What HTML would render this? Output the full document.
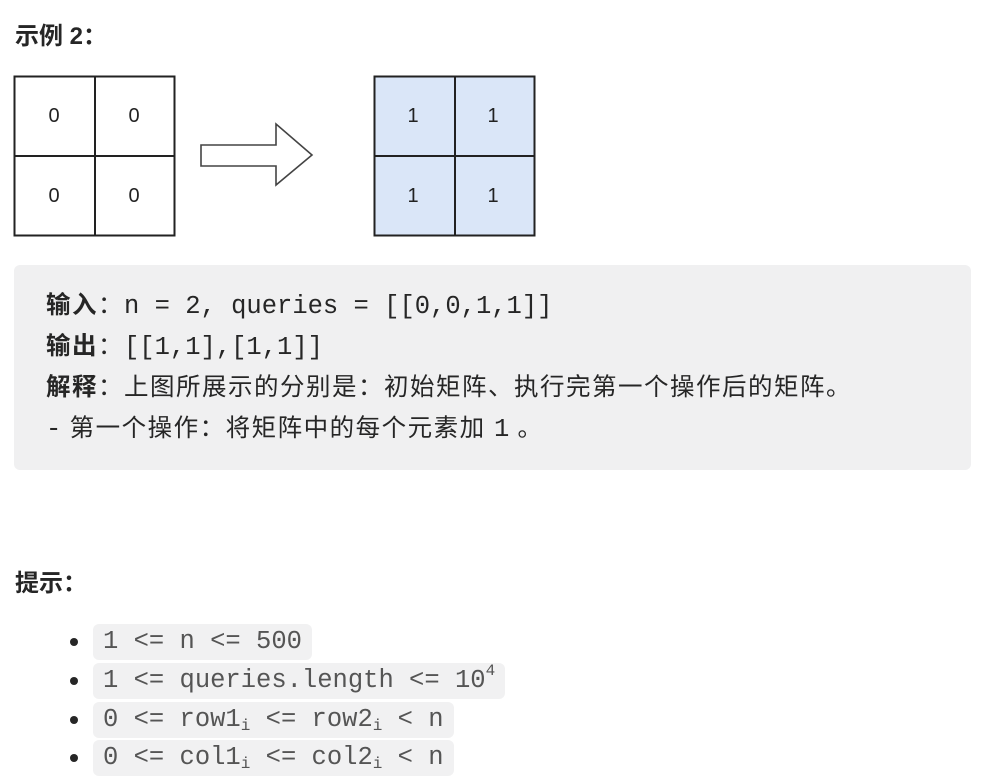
<!DOCTYPE html>
<html><head><meta charset="utf-8"><style>
body{margin:0;background:#fff;width:986px;height:782px;position:relative;font-family:"Liberation Sans","Noto Sans CJK SC",sans-serif;color:#262626;overflow:hidden}
.abs{position:absolute}
h{position:absolute;font-weight:bold;font-size:24px}
.pre{position:absolute;left:14px;top:265px;width:957px;height:205px;background:#f0f0f1;border-radius:6px}
.ln{position:absolute;left:32px;font-size:24.5px;letter-spacing:1.5px;white-space:pre;height:41px;line-height:41px}
.m{font-family:"Liberation Mono",monospace;font-size:25.5px;letter-spacing:0}
.li{position:absolute;left:93px;height:36px;line-height:36px;background:#f1f1f2;border-radius:6px;padding:0 10px;font-family:"Liberation Mono",monospace;font-size:25.5px;color:#555;white-space:pre}
.dot{position:absolute;left:70px;width:8px;height:8px;border-radius:50%;background:#262626}
sub{font-size:16px;vertical-align:-4px;line-height:0}
sup{font-size:16px;vertical-align:12px;line-height:0}
</style></head><body>
<h style="left:15px;top:16px">示例 2：</h>
<svg class="abs" style="left:0;top:0" width="560" height="250">
<g font-family="Liberation Sans" font-size="20" text-anchor="middle" fill="#222">
<rect x="14.5" y="76.5" width="160" height="159" fill="#fff" stroke="#222" stroke-width="2"/>
<line x1="95" y1="76" x2="95" y2="236" stroke="#222" stroke-width="2"/>
<line x1="14" y1="156" x2="175" y2="156" stroke="#222" stroke-width="2"/>
<text x="54" y="122">0</text><text x="134" y="122">0</text><text x="54" y="202">0</text><text x="134" y="202">0</text>
<rect x="374.5" y="76.5" width="160" height="159" fill="#dae6f8" stroke="#222" stroke-width="2"/>
<line x1="455" y1="76" x2="455" y2="236" stroke="#222" stroke-width="2"/>
<line x1="374" y1="156" x2="535" y2="156" stroke="#222" stroke-width="2"/>
<text x="413" y="122">1</text><text x="493" y="122">1</text><text x="413" y="202">1</text><text x="493" y="202">1</text>
</g>
<path d="M201 145 H276 V124 L312 155 L276 185 V166 H201 Z" fill="#fff" stroke="#444" stroke-width="1.6"/>
</svg>
<div class="pre">
<div class="ln" style="top:20px"><b>输入</b>：<span class="m">n = 2, queries = [[0,0,1,1]]</span></div>
<div class="ln" style="top:61px"><b>输出</b>：<span class="m">[[1,1],[1,1]]</span></div>
<div class="ln" style="top:102px"><b>解释</b>：上图所展示的分别是：初始矩阵、执行完第一个操作后的矩阵。</div>
<div class="ln" style="top:143px"><span class="m">-</span> 第一个操作：将矩阵中的每个元素加 <span class="m">1</span> 。</div>
</div>
<h style="left:15px;top:563px">提示：</h>
<div class="dot" style="top:638px"></div><div class="li" style="top:624px">1 &lt;= n &lt;= 500</div>
<div class="dot" style="top:677px"></div><div class="li" style="top:663px">1 &lt;= queries.length &lt;= 10<sup>4</sup></div>
<div class="dot" style="top:716px"></div><div class="li" style="top:702px">0 &lt;= row1<sub>i</sub> &lt;= row2<sub>i</sub> &lt; n</div>
<div class="dot" style="top:754px"></div><div class="li" style="top:740px">0 &lt;= col1<sub>i</sub> &lt;= col2<sub>i</sub> &lt; n</div>
</body></html>
